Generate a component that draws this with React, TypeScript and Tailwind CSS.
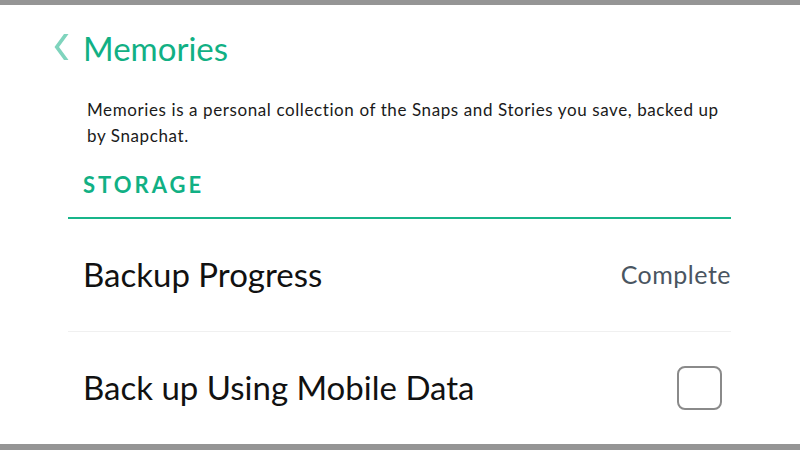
import React from 'react';

const font = { fontFamily: 'Lato, "Open Sans", sans-serif' };

function Checkbox() {
  return <div className="h-[44px] w-[45px] rounded-[8px] border-2 border-[#8a8a8a] bg-white" />;
}

export default function App() {
  return (
    <div className="flex h-[450px] w-[800px] flex-col bg-white" style={font}>
      <div className="h-[5px] shrink-0 bg-[#959595]" />

      <div className="flex flex-1 flex-col pl-[68px] pr-[69px]">
        {/* header */}
        <div className="mt-[24px] flex items-center">
          <svg width="15" height="26" viewBox="0 0 15 26" className="ml-[-14px] mr-[14px] mt-[-2px]">
            <polygon points="10,0 14.5,0 5,13 14.5,26 10,26 0.5,13" fill="#7fd4bd" />
          </svg>
          <h1 className="text-[33px] leading-[38px] text-[#11b084]">Memories</h1>
        </div>

        <p className="mt-[30px] pl-[19px] pr-[6px] text-[17px] leading-[26px] tracking-[0.6px] text-[#1a1a1a]">
          Memories is a personal collection of the Snaps and Stories you save, backed up by Snapchat.
        </p>

        <div className="mt-[22px] pl-[15px] text-[22px] font-bold leading-[28px] tracking-[3px] text-[#11b084]">
          STORAGE
        </div>

        <div className="mt-[18px] h-[2px] shrink-0 bg-[#18b58a]" />

        <div className="flex h-[113px] shrink-0 items-center justify-between border-b border-[#f0f0f0] pl-[15px]">
          <span className="text-[33px] text-[#111]">Backup Progress</span>
          <span className="text-[25px] tracking-[0.5px] text-[#4a5561]">Complete</span>
        </div>

        <div className="flex flex-1 items-center justify-between pl-[15px] pr-[9px]">
          <span className="text-[33px] text-[#111]">Back up Using Mobile Data</span>
          <Checkbox />
        </div>
      </div>

      <div className="h-[6px] shrink-0 bg-[#959595]" />
    </div>
  );
}
